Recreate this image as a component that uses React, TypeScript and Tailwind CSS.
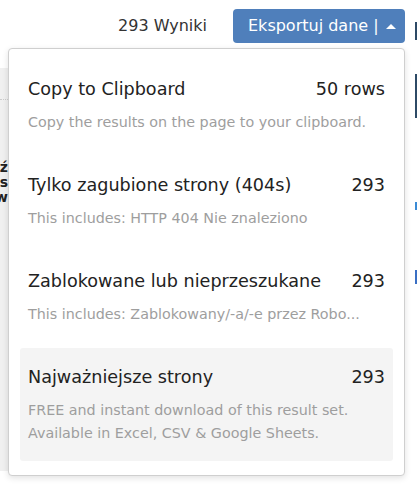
import React from "react";

type Option = {
  title: string;
  count: string;
  lines: string[];
  active?: boolean;
};

const options: Option[] = [
  {
    title: "Copy to Clipboard",
    count: "50 rows",
    lines: ["Copy the results on the page to your clipboard."],
  },
  {
    title: "Tylko zagubione strony (404s)",
    count: "293",
    lines: ["This includes: HTTP 404 Nie znaleziono"],
  },
  {
    title: "Zablokowane lub nieprzeszukane",
    count: "293",
    lines: ["This includes: Zablokowany/-a/-e przez Robo..."],
  },
  {
    title: "Najważniejsze strony",
    count: "293",
    lines: ["FREE and instant download of this result set.", "Available in Excel, CSV & Google Sheets."],
    active: true,
  },
];

export default function App() {
  return (
    <div
      className="relative h-[487px] w-[417px] overflow-hidden bg-white"
      style={{ fontFamily: '"DejaVu Sans", Verdana, sans-serif' }}
    >
      {/* toolbar */}
      <div className="flex items-center justify-end gap-[26px] pr-[12px] pt-[9px]">
        <span className="text-[16px] text-[#333]">293 Wyniki</span>
        <button className="flex h-[34px] w-[172px] items-center gap-[7px] rounded-[4px] bg-[#4f7fbb] pl-[15px] text-[16px] text-white">
          <span>Eksportuj dane |</span>
          <span className="h-0 w-0 border-x-[5px] border-b-[5px] border-x-transparent border-b-white" />
        </button>
      </div>

      {/* page content behind the menu */}
      <div className="mt-[25px] flex">
        <div className="h-[403px] w-[8px] bg-[#f0f0f0]">
          <div className="mt-[31px] border-t border-dotted border-[#ccc]" />
          <div className="mt-[60px] flex flex-col items-end text-[14px] font-bold leading-[15px] text-[#222]">
            <span>ź</span>
            <span>s</span>
            <span>w</span>
          </div>
        </div>
      </div>
      <div className="absolute right-0 top-0 flex h-full w-[2px] flex-col">
        <div className="mt-[22px] h-[18px] bg-[#2d4a66]" />
        <div className="mt-[34px] h-[44px] bg-[#2d4a66]" />
        <div className="mt-[84px] h-[8px] bg-[#3a8bd6]" />
        <div className="mt-[60px] h-[14px] bg-[#3a6fc4]" />
      </div>

      {/* export menu */}
      <div className="absolute left-[8px] top-[48px] w-[397px] rounded-[4px] border border-[#cfcfcf] bg-white px-[11px] pb-[14px] pt-[11px] shadow-[0_2px_6px_rgba(0,0,0,0.12)]">
        <div className="flex flex-col gap-[6px]">
          {options.map((o) => (
            <div
              key={o.title}
              className={`rounded-[3px] px-[8px] py-[16px] ${o.active ? "bg-[#f4f4f4]" : ""}`}
            >
              <div className="flex items-center justify-between gap-2 whitespace-nowrap text-[17.6px] leading-[26px] text-[#222]">
                <span>{o.title}</span>
                <span>{o.count}</span>
              </div>
              <div className="mt-[9px] text-[14.3px] leading-[23px] text-[#9e9e9e]">
                {o.lines.map((l) => (
                  <div key={l} className="whitespace-nowrap">
                    {l}
                  </div>
                ))}
              </div>
            </div>
          ))}
        </div>
      </div>
    </div>
  );
}
